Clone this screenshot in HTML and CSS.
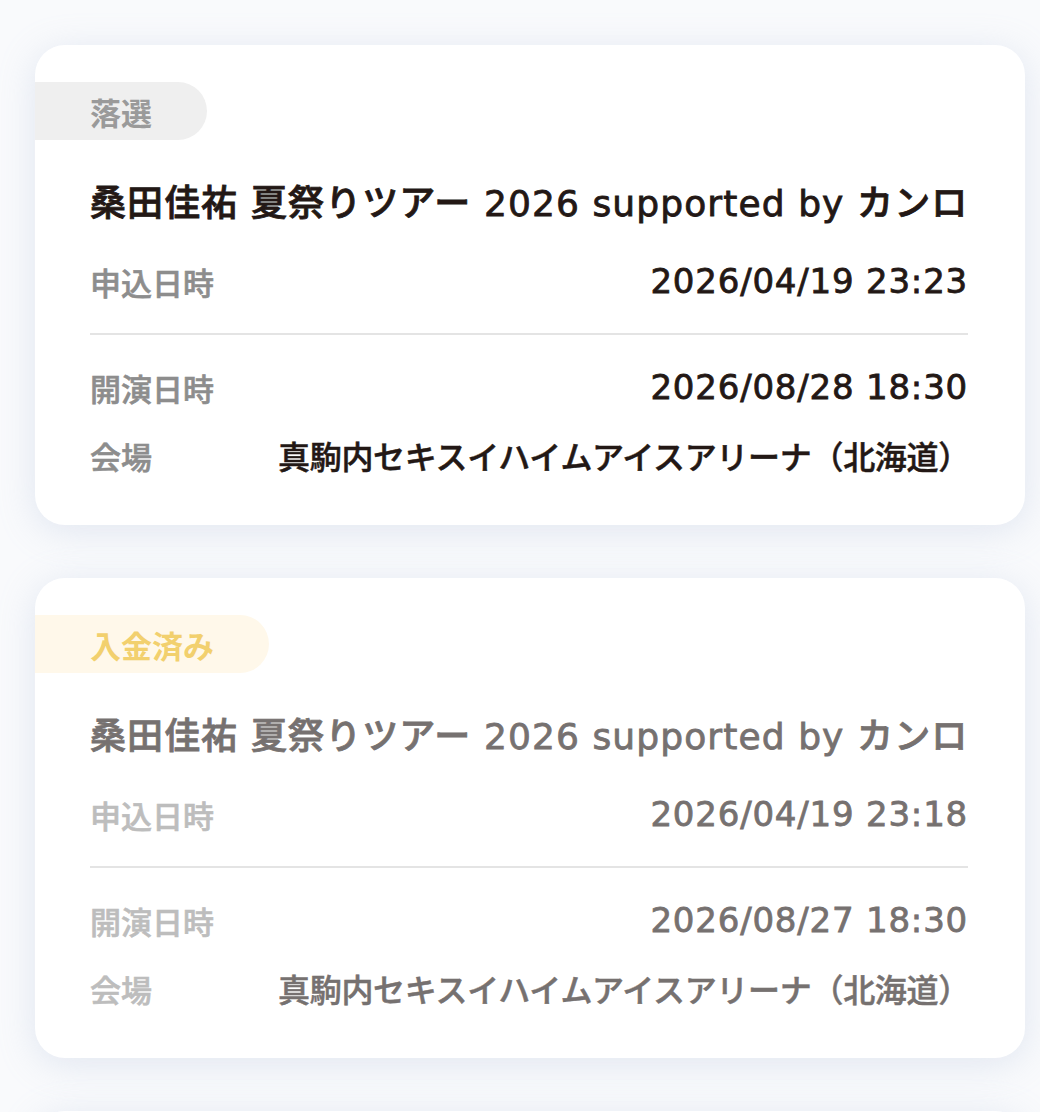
FILE: index.html
```html
<!DOCTYPE html>
<html lang="ja">
<head>
    <meta charset="UTF-8">
    <meta name="viewport" content="width=device-width, initial-scale=1.0">
    <title>申込履歴</title>
    <link rel="stylesheet" href="styles.css">
</head>
<body>
    <div class="list">
        <div class="card">
            <span class="badge lost">落選</span>
            <div class="card-body">
                <h2 class="title">桑田佳祐 夏祭りツアー 2026 supported by カンロ</h2>
                <div class="row">
                    <span class="label">申込日時</span>
                    <span class="value">2026/04/19 23:23</span>
                </div>
                <hr class="divider">
                <div class="row">
                    <span class="label">開演日時</span>
                    <span class="value">2026/08/28 18:30</span>
                </div>
                <div class="row venue-row">
                    <span class="label">会場</span>
                    <span class="value venue">真駒内セキスイハイムアイスアリーナ（北海道）</span>
                </div>
            </div>
        </div>

        <div class="card muted">
            <span class="badge paid">入金済み</span>
            <div class="card-body">
                <h2 class="title">桑田佳祐 夏祭りツアー 2026 supported by カンロ</h2>
                <div class="row">
                    <span class="label">申込日時</span>
                    <span class="value">2026/04/19 23:18</span>
                </div>
                <hr class="divider">
                <div class="row">
                    <span class="label">開演日時</span>
                    <span class="value">2026/08/27 18:30</span>
                </div>
                <div class="row venue-row">
                    <span class="label">会場</span>
                    <span class="value venue">真駒内セキスイハイムアイスアリーナ（北海道）</span>
                </div>
            </div>
        </div>

        <!-- next card, only its top edge is in view -->
        <div class="card card-stub"></div>
    </div>
</body>
</html>
```

FILE: styles.css
```css
body {
    margin: 0;
    background-color: #f9fafc;
    font-family: "DejaVu Sans", "Noto Sans CJK JP", sans-serif;
    color: #231815;
}
.list {
    display: flex;
    flex-direction: column;
    gap: 53px;
    padding: 45px 15px 0 35px;
}
.card {
    background-color: #fff;
    border-radius: 30px;
    padding: 37px 0 46px;
    box-shadow: 0 6px 36px rgba(170, 185, 215, 0.3);
}
.card-stub { height: 400px; }
.badge {
    display: inline-flex;
    align-items: center;
    height: 58px;
    padding: 0 55px;
    border-radius: 0 29px 29px 0;
    font-size: 31px;
    font-weight: 700;
}
.lost { background-color: #efefef; color: #9a9a9a; }
.paid { background-color: #fff8ea; color: #f2d06e; }
.card-body {
    padding: 0 57px 0 55px;
}
.title {
    margin: 39px 0 28px;
    font-size: 36px;
    font-weight: 500;
    line-height: 50px;
    letter-spacing: 1.1px;
    white-space: nowrap;
    -webkit-text-stroke: 0.8px currentColor;
}
.row {
    display: flex;
    align-items: center;
    justify-content: space-between;
    height: 48px;
}
.venue-row { margin-top: 20px; }
.label {
    flex: 0 0 188px;
    font-size: 31px;
    font-weight: 500;
    color: #8d8d8d;
    -webkit-text-stroke: 0.6px currentColor;
}
.value {
    font-size: 34px;
    font-weight: 400;
    letter-spacing: 0.8px;
    white-space: nowrap;
    -webkit-text-stroke: 0.8px currentColor;
}
.venue {
    font-size: 32px;
    font-weight: 500;
    letter-spacing: -0.3px;
    -webkit-text-stroke: 0.5px currentColor;
}
.divider {
    margin: 28px 0;
    border: none;
    border-top: 2px solid #e4e4e4;
}
.muted .title,
.muted .value { color: #767170; }
.muted .label { color: #bdbdbd; }
```
